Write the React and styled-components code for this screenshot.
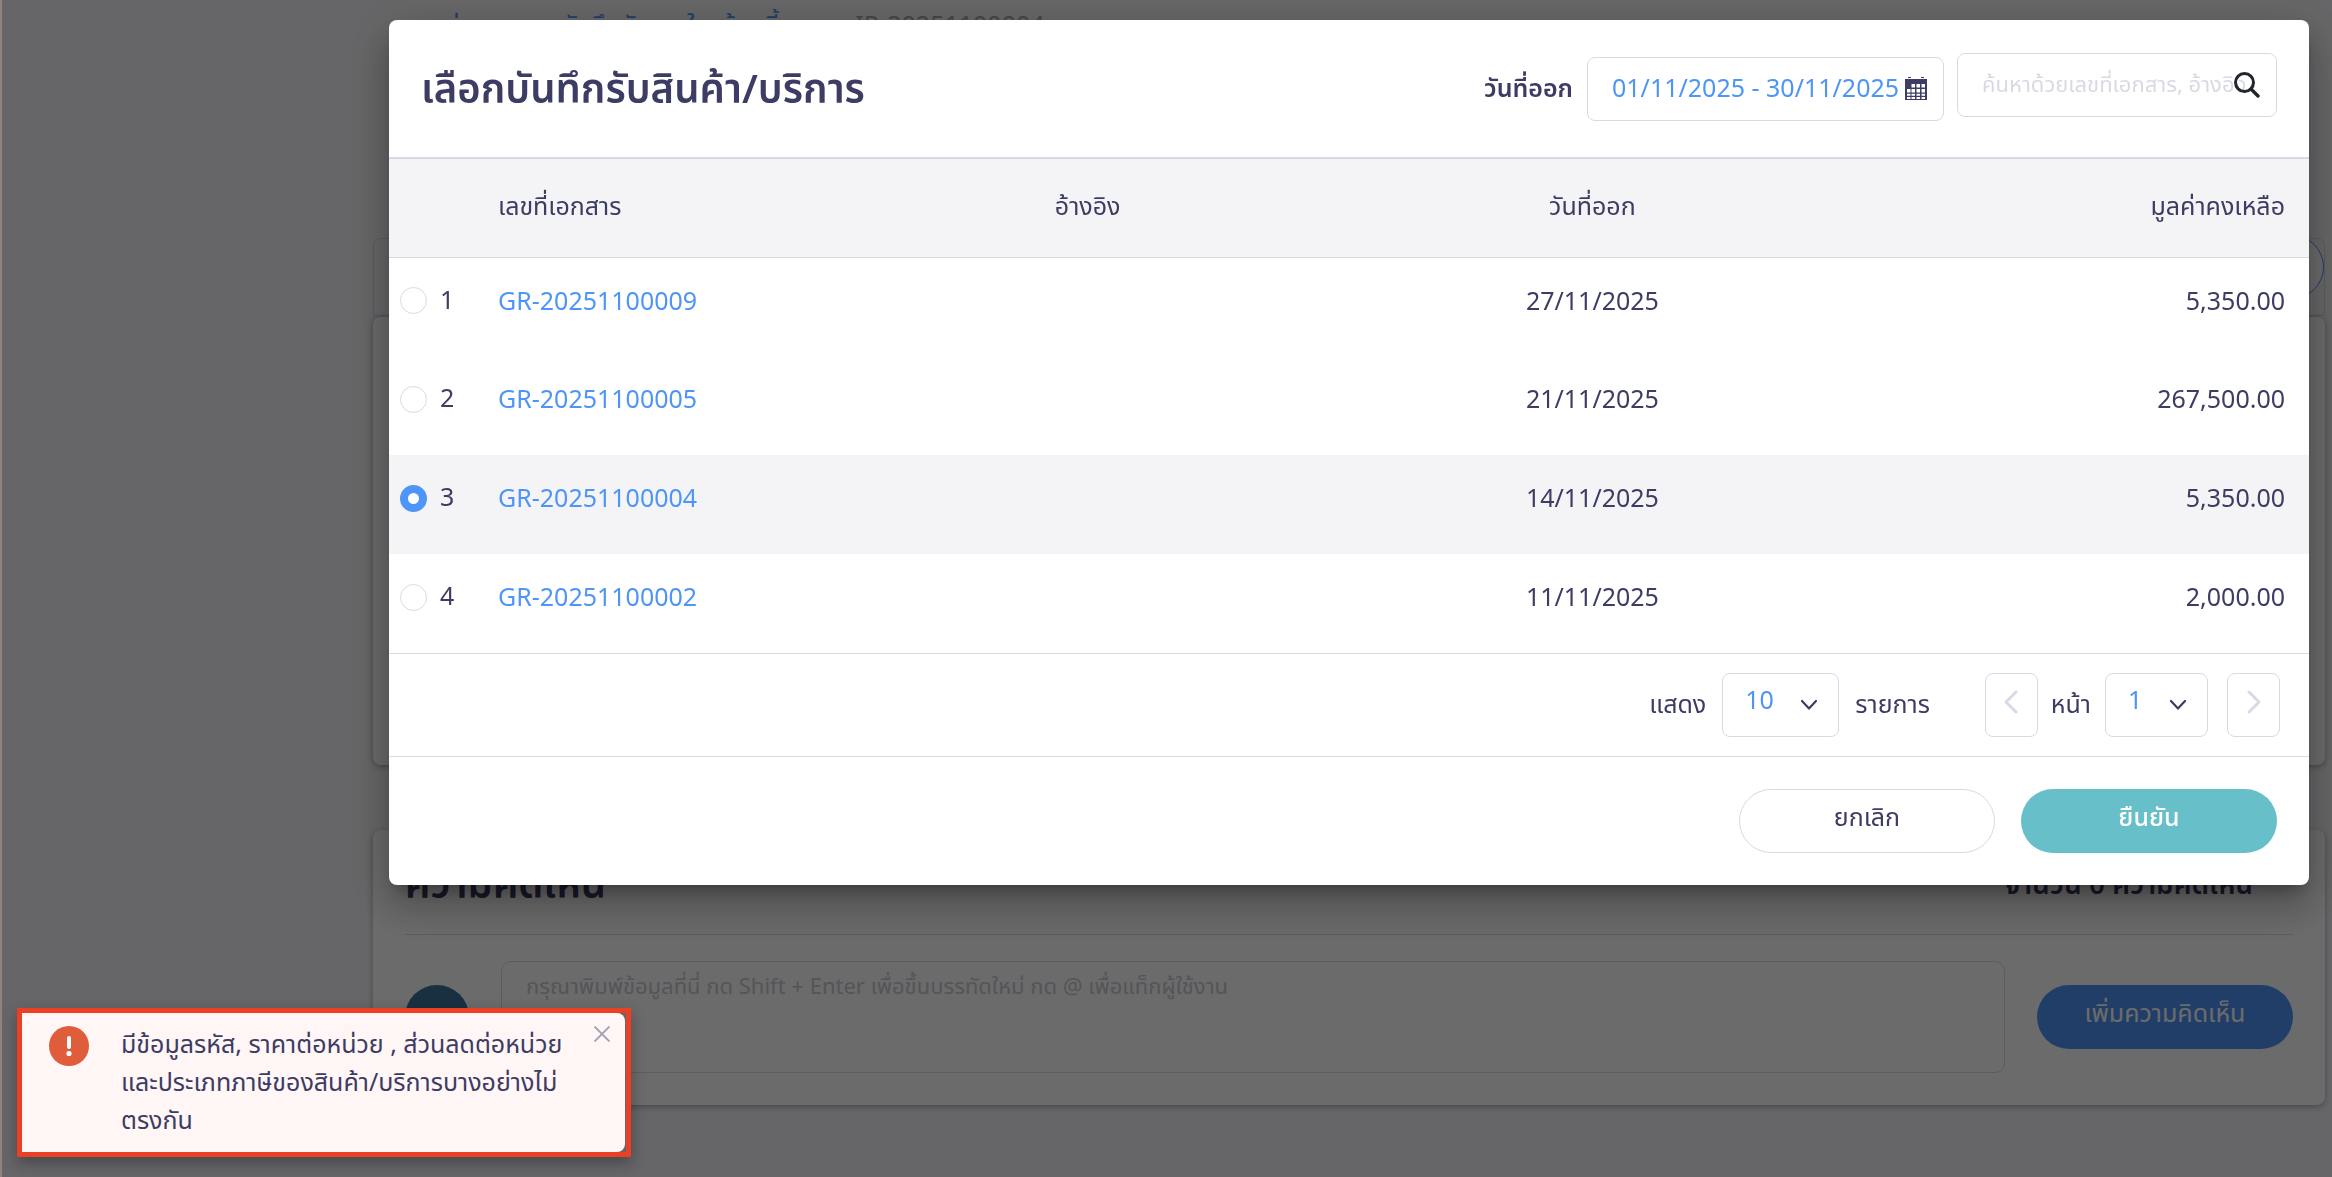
import React, { useState } from "react";
import styled, { createGlobalStyle } from "styled-components";

const ink = "#3c3c64";
const blue = "#4f95f8";
const line = "#d9d9e5";

const GlobalStyle = createGlobalStyle`
  *, *::before, *::after { box-sizing: border-box; }
  body {
    margin: 0;
    background: #f4f4f8;
    color: ${ink};
    font-family: "Noto Sans Thai", "Noto Sans", sans-serif;
    font-size: 25px;
    font-weight: 400;
    line-height: 40px;
    overflow: hidden;
  }
  input, textarea, select, button { font: inherit; color: inherit; }
`;

/* ---------- page behind the dialog ---------- */

const Page = styled.div`
  display: flex;
  min-height: 100vh;
`;

const Sidebar = styled.aside`
  width: 366px;
  flex: none;
  border-left: 2px solid #8f8577;
`;

const Main = styled.main`
  flex: 1;
  min-width: 0;
  padding: 6px 7px 0;
`;

const Breadcrumb = styled.nav`
  display: flex;
  gap: 76px;
  height: 232px;
  padding-left: 36px;
  a { color: ${blue}; text-decoration: none; }
  span { color: #aba1b6; }
`;

const TabBar = styled.div`
  display: flex;
  justify-content: flex-end;
  height: 78px;
  border: 1px solid ${line};
  border-radius: 8px 8px 0 0;
`;

const Card = styled.section`
  background: #fff;
  border-radius: 8px;
  box-shadow: 0 2px 6px rgba(0, 0, 0, 0.3);
`;

const DetailCard = styled(Card)`
  height: 449px;
  border-top: 1px solid ${line};
`;

const CommentCard = styled(Card)`
  margin-top: 65px;
  padding: 31px 32px 32px;
`;

const CommentHead = styled.header`
  display: flex;
  justify-content: space-between;
  align-items: center;
  padding: 0 40px 23px 0;
  border-bottom: 1px solid ${line};
`;

const CommentTitle = styled.h2`
  margin: 0;
  font-size: 40px;
  font-weight: 600;
  line-height: 50px;
`;

const CommentCount = styled.p`
  margin: 0;
  font-size: 28px;
  font-weight: 600;
`;

const CommentForm = styled.form`
  display: flex;
  align-items: center;
  gap: 32px;
  padding-top: 26px;
`;

const Avatar = styled.span`
  width: 64px;
  height: 64px;
  border-radius: 50%;
  background: #3a7299;
`;

const CommentBox = styled.textarea`
  display: block;
  flex: 1;
  height: 112px;
  padding: 6px 24px;
  border: 1px solid ${line};
  border-radius: 10px;
  background: transparent;
  font-size: 22px;
  resize: none;
  &::placeholder { color: #c9c9d3; opacity: 1; }
`;

/* ---------- buttons ---------- */

const PillButton = styled.button`
  width: 256px;
  height: 64px;
  padding: 0 16px 6px;
  border: 1px solid ${(p) => p.$border || "transparent"};
  border-radius: 32px;
  background: ${(p) => p.$bg || "#fff"};
  color: ${(p) => p.$color || ink};
  font-weight: ${(p) => p.$weight || 400};
  cursor: pointer;
`;

const OutlineButton = styled(PillButton)`
  margin-top: -4px;
`;

/* ---------- dialog ---------- */

const Overlay = styled.div`
  position: fixed;
  inset: 0 0 0 2px;
  padding: 20px 23px 0 387px;
  background: rgba(0, 0, 0, 0.58);
`;

const Dialog = styled.div`
  border-radius: 8px;
  background: #fff;
  box-shadow: 0 11px 15px -7px rgba(0, 0, 0, 0.3), 0 24px 38px 3px rgba(0, 0, 0, 0.16),
    0 9px 46px 8px rgba(0, 0, 0, 0.14);
`;

const DialogHead = styled.header`
  display: flex;
  justify-content: space-between;
  height: 139px;
  padding: 33px 32px 0;
  border-bottom: 2px solid ${line};
`;

const DialogTitle = styled.h1`
  margin: 0;
  font-size: 40px;
  font-weight: 600;
  line-height: 76px;
`;

const Filters = styled.div`
  display: flex;
  align-items: flex-start;
  gap: 13px;
`;

const DateField = styled.label`
  display: flex;
  align-items: center;
  gap: 14px;
  padding-top: 4px;
  font-weight: 600;
`;

const Field = styled.span`
  display: flex;
  align-items: center;
  width: ${(p) => p.$width}px;
  height: 64px;
  padding: 0 16px 0 24px;
  border: 1px solid ${line};
  border-radius: 8px;
  svg { flex: none; }
`;

const FieldInput = styled.input`
  flex: 1;
  min-width: 0;
  height: 60px;
  padding: 0;
  border: 0;
  outline: 0;
  background: transparent;
  color: ${blue};
  font-weight: 400;
  &::placeholder { color: ${line}; opacity: 1; }
`;

const SearchField = styled(Field)`
  input { margin-right: -16px; font-size: 22px; }
`;

const Table = styled.table`
  width: 100%;
  table-layout: fixed;
  border-collapse: collapse;
  border-bottom: 1px solid ${line};
`;

const Th = styled.th`
  height: 98px;
  padding: 0 24px 2px;
  border-bottom: 1px solid ${line};
  background: #f4f4f7;
  font-weight: 400;
  text-align: ${(p) => p.$align || "left"};
`;

const Tr = styled.tr`
  background: ${(p) => (p.$selected ? "#f4f4f7" : "#fff")};
`;

const Td = styled.td`
  height: 99px;
  padding: 24px 24px 0;
  text-align: ${(p) => p.$align || "left"};
  vertical-align: top;
  a { color: ${blue}; text-decoration: none; }
`;

const PickCell = styled(Td)`
  padding: 23px 0 0 11px;
`;

const Pick = styled.label`
  display: flex;
  align-items: center;
  gap: 13px;
`;

const Radio = styled.input`
  appearance: none;
  width: 27px;
  height: 27px;
  margin: 0;
  border: 1px solid ${line};
  border-radius: 50%;
  background: #fff;
  &:checked { border: 8px solid ${blue}; }
`;

const Pager = styled.div`
  display: flex;
  justify-content: flex-end;
  align-items: center;
  height: 103px;
  padding-right: 29px;
  border-bottom: 1px solid ${line};
`;

const PagerGroup = styled.label`
  display: flex;
  align-items: center;
  gap: ${(p) => p.$gap}px;
  margin: 0 ${(p) => p.$after}px 0 ${(p) => p.$before || 0}px;
`;

const SelectWrap = styled.span`
  position: relative;
  display: flex;
  width: ${(p) => p.$width}px;
  svg {
    position: absolute;
    right: 21px;
    top: 26px;
    pointer-events: none;
  }
`;

const Select = styled.select`
  appearance: none;
  width: 100%;
  height: 64px;
  padding: 0 22px 8px;
  border: 1px solid ${line};
  border-radius: 8px;
  background: #fff;
  color: ${blue};
`;

const StepButton = styled.button`
  display: flex;
  align-items: center;
  justify-content: center;
  width: 53px;
  height: 64px;
  padding: 0 0 6px;
  border: 1px solid ${line};
  border-radius: 8px;
  background: #fff;
  color: ${line};
`;

const DialogFoot = styled.footer`
  display: flex;
  justify-content: flex-end;
  gap: 26px;
  padding: 32px;
`;

/* ---------- toast ---------- */

const ToastFrame = styled.div`
  position: fixed;
  left: 17px;
  bottom: 20px;
  width: 614px;
  border: 5px solid #ec4026;
  box-shadow: 0 6px 14px rgba(0, 0, 0, 0.3);
  background: #666;
`;

const Toast = styled.div`
  display: flex;
  align-items: flex-start;
  height: 139px;
  margin-right: 1px;
  padding: 13px 15px 0 27px;
  border-radius: 0 8px 8px 0;
  background: #fff6f5;
`;

const ToastText = styled.p`
  flex: 1;
  margin: 0 0 0 32px;
  line-height: 38px;
  white-space: nowrap;
`;

const CloseButton = styled.button`
  display: flex;
  padding: 0;
  border: 0;
  background: none;
`;

/* ---------- icons ---------- */

const CalendarIcon = () => (
  <svg width="22" height="24" viewBox="0 0 22 24" fill={ink}>
    <path d="M3 0h3v1H3zM16 0h3v1h-3z" />
    <path
      fillRule="evenodd"
      d="M0 2h22v21H0zM6.500 7v3.500h3.500V7zM11.500 7v3.500H15V7zM16.500 7v3.500H20V7zM2 12V15.500h3.500V12zM6.500 12V15.500H10V12zM11.500 12V15.500H15V12zM16.500 12V15.500H20V12zM2 16.800v2h3.500v-2zM6.500 16.800v2H10v-2zM11.500 16.800v2H15v-2zM16.500 16.800v2H20v-2zM2 20v2h3.500v-2zM6.500 20v2H10v-2zM11.500 20v2H15v-2zM16.500 20v2H20v-2z"
    />
  </svg>
);

const SearchIcon = () => (
  <svg width="26" height="26" viewBox="0 0 26 26" fill="none" stroke="#22262c" strokeWidth="3">
    <circle cx="10.500" cy="10.500" r="9" />
    <path d="M17 17l7 7" strokeLinecap="round" strokeWidth="3.400" />
  </svg>
);

const CaretIcon = () => (
  <svg width="18" height="12" viewBox="0 0 18 12" fill="none" stroke={ink} strokeWidth="2.200" strokeLinecap="round" strokeLinejoin="round">
    <path d="M2 2l7 7.500L16 2" />
  </svg>
);

const ArrowIcon = ({ next }) => (
  <svg width="14" height="24" viewBox="0 0 14 24" fill="none" stroke="currentColor" strokeWidth="3" strokeLinecap="round" strokeLinejoin="round">
    <path d={next ? "M2 2l10 10L2 22" : "M12 2L2 12l10 10"} />
  </svg>
);

const AlertIcon = () => (
  <svg width="40" height="40" viewBox="0 0 40 40" fill="#fff">
    <circle cx="20" cy="20" r="20" fill="#e05d3c" />
    <rect x="18" y="10" width="4" height="13" rx="2" />
    <circle cx="20" cy="27.500" r="2.600" />
  </svg>
);

const CloseIcon = () => (
  <svg width="16" height="16" viewBox="0 0 16 16" stroke="#a09db4" strokeWidth="1.800">
    <path d="M0.500 0.500l15 15M15.500 0.500l-15 15" />
  </svg>
);

/* ---------- data ---------- */

const receipts = [
  { no: 1, doc: "GR-20251100009", date: "27/11/2025", amount: "5,350.00" },
  { no: 2, doc: "GR-20251100005", date: "21/11/2025", amount: "267,500.00" },
  { no: 3, doc: "GR-20251100004", date: "14/11/2025", amount: "5,350.00" },
  { no: 4, doc: "GR-20251100002", date: "11/11/2025", amount: "2,000.00" },
];

export default function App() {
  const [selected, setSelected] = useState(3);

  return (
    <>
      <GlobalStyle />
      <Page>
        <Sidebar />
        <Main>
          <Breadcrumb>
            <a href="#expense">รายจ่าย</a>
            <a href="#invoices">บันทึกรับจากใบแจ้งหนี้</a>
            <span>IR-20251100004</span>
          </Breadcrumb>
          <TabBar>
            <OutlineButton type="button" $border={blue} aria-label="ตัวเลือก" />
          </TabBar>
          <DetailCard />
          <CommentCard>
            <CommentHead>
              <CommentTitle>ความคิดเห็น</CommentTitle>
              <CommentCount>จำนวน 0 ความคิดเห็น</CommentCount>
            </CommentHead>
            <CommentForm>
              <Avatar />
              <CommentBox
                aria-label="ความคิดเห็น"
                placeholder="กรุณาพิมพ์ข้อมูลที่นี่ กด Shift + Enter เพื่อขึ้นบรรทัดใหม่ กด @ เพื่อแท็กผู้ใช้งาน"
              />
              <PillButton type="button" $bg={blue} $color="#fff">
                เพิ่มความคิดเห็น
              </PillButton>
            </CommentForm>
          </CommentCard>
        </Main>
      </Page>

      <Overlay>
        <Dialog role="dialog" aria-modal="true" aria-labelledby="dialog-title">
          <DialogHead>
            <DialogTitle id="dialog-title">เลือกบันทึกรับสินค้า/บริการ</DialogTitle>
            <Filters>
              <DateField>
                วันที่ออก
                <Field $width={357}>
                  <FieldInput type="text" defaultValue="01/11/2025 - 30/11/2025" />
                  <CalendarIcon />
                </Field>
              </DateField>
              <SearchField $width={320}>
                <FieldInput
                  type="text"
                  aria-label="ค้นหา"
                  placeholder="ค้นหาด้วยเลขที่เอกสาร, อ้างอิง"
                />
                <SearchIcon />
              </SearchField>
            </Filters>
          </DialogHead>

          <Table>
            <colgroup>
              <col style={{ width: 85 }} />
              <col style={{ width: "29%" }} />
              <col style={{ width: "19%" }} />
              <col style={{ width: "20.5%" }} />
              <col />
            </colgroup>
            <thead>
              <tr>
                <Th />
                <Th>เลขที่เอกสาร</Th>
                <Th>อ้างอิง</Th>
                <Th $align="center">วันที่ออก</Th>
                <Th $align="right">มูลค่าคงเหลือ</Th>
              </tr>
            </thead>
            <tbody>
              {receipts.map((r) => (
                <Tr key={r.no} $selected={r.no === selected}>
                  <PickCell>
                    <Pick>
                      <Radio
                        type="radio"
                        name="receipt"
                        checked={r.no === selected}
                        onChange={() => setSelected(r.no)}
                      />
                      {r.no}
                    </Pick>
                  </PickCell>
                  <Td>
                    <a href={`#${r.doc}`}>{r.doc}</a>
                  </Td>
                  <Td />
                  <Td $align="center">{r.date}</Td>
                  <Td $align="right">{r.amount}</Td>
                </Tr>
              ))}
            </tbody>
          </Table>

          <Pager>
            <PagerGroup $gap={16} $after={55}>
              แสดง
              <SelectWrap $width={117}>
                <Select defaultValue="10">
                  <option>10</option>
                  <option>20</option>
                </Select>
                <CaretIcon />
              </SelectWrap>
              รายการ
            </PagerGroup>
            <StepButton type="button" aria-label="หน้าก่อน" disabled>
              <ArrowIcon />
            </StepButton>
            <PagerGroup $gap={14} $before={13} $after={19}>
              หน้า
              <SelectWrap $width={103}>
                <Select defaultValue="1">
                  <option>1</option>
                </Select>
                <CaretIcon />
              </SelectWrap>
            </PagerGroup>
            <StepButton type="button" aria-label="หน้าถัดไป" disabled>
              <ArrowIcon next />
            </StepButton>
          </Pager>

          <DialogFoot>
            <PillButton type="button" $border={line}>
              ยกเลิก
            </PillButton>
            <PillButton type="button" $bg="#67bfc9" $color="#fff" $weight={500}>
              ยืนยัน
            </PillButton>
          </DialogFoot>
        </Dialog>
      </Overlay>

      <ToastFrame role="alert">
        <Toast>
          <AlertIcon />
          <ToastText>
            มีข้อมูลรหัส, ราคาต่อหน่วย , ส่วนลดต่อหน่วย
            <br />
            และประเภทภาษีของสินค้า/บริการบางอย่างไม่
            <br />
            ตรงกัน
          </ToastText>
          <CloseButton type="button" aria-label="ปิด">
            <CloseIcon />
          </CloseButton>
        </Toast>
      </ToastFrame>
    </>
  );
}
